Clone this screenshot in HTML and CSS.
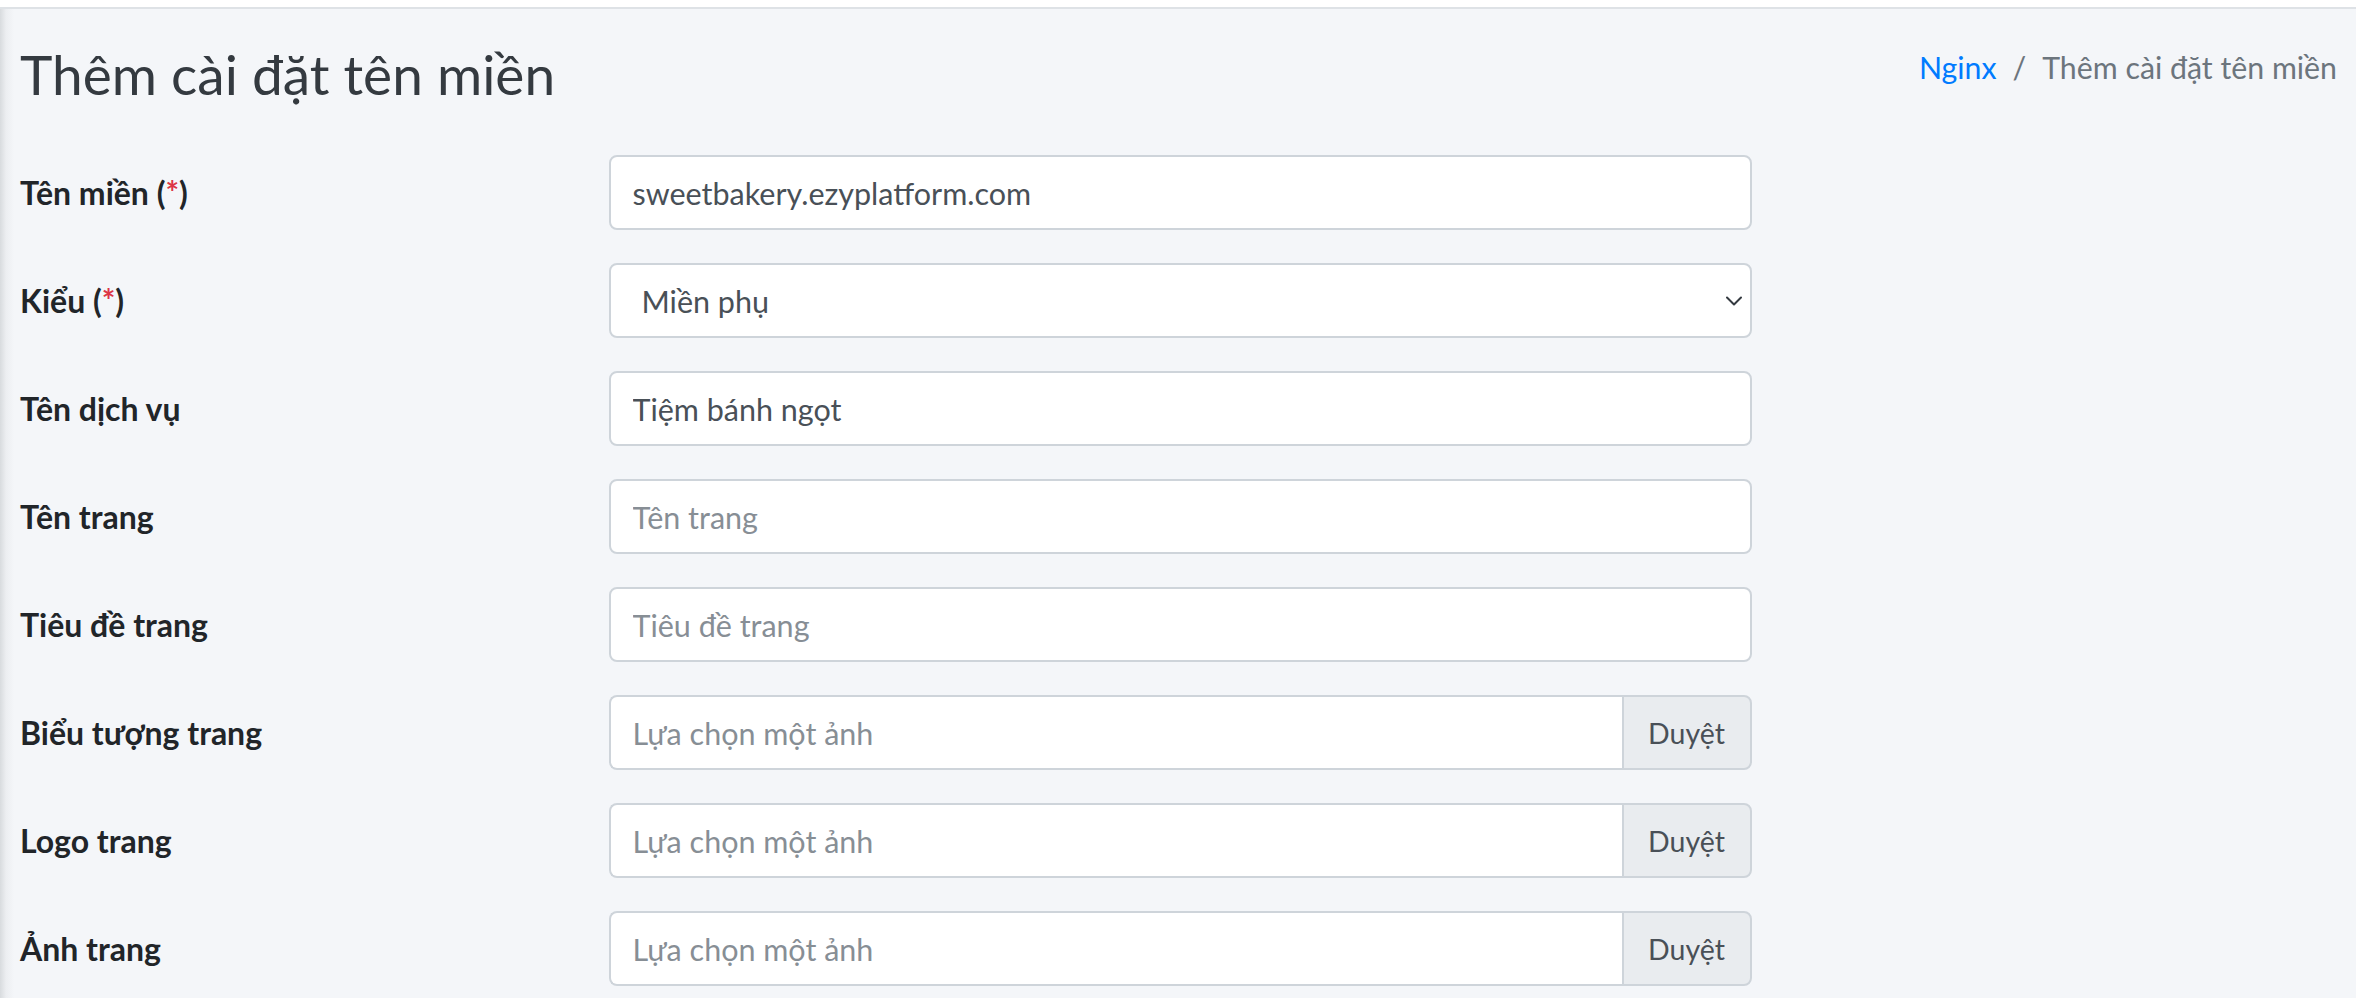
FILE: index.html
```html
<!DOCTYPE html>
<html lang="vi">
<head>
  <meta charset="UTF-8" />
  <meta name="viewport" content="width=device-width, initial-scale=1.0" />
  <title>Thêm cài đặt tên miền</title>
  <link rel="stylesheet" href="styles.css">
</head>
<body>
  <!-- Top navbar (cut off) -->
  <div class="main-header"></div>

  <div class="content-wrapper">
    <!-- Page header -->
    <div class="content-header">
      <h1 class="page-title">Thêm cài đặt tên miền</h1>
      <ol class="breadcrumb">
        <li class="breadcrumb-item"><a href="#">Nginx</a></li>
        <li class="breadcrumb-sep">/</li>
        <li class="breadcrumb-item active">Thêm cài đặt tên miền</li>
      </ol>
    </div>

    <!-- Domain form -->
    <form class="content">
      <div class="form-row">
        <label class="col-label">Tên miền (<span class="required">*</span>)</label>
        <div class="col-field">
          <input class="form-control" type="text" value="sweetbakery.ezyplatform.com">
        </div>
      </div>

      <div class="form-row">
        <label class="col-label">Kiểu (<span class="required">*</span>)</label>
        <div class="col-field">
          <div class="custom-select">
            <span>Miền phụ</span>
            <svg class="chevron" width="16" height="10" viewBox="0 0 16 10">
              <path d="M1 1.5l7 7 7-7" fill="none" stroke="#343a40" stroke-width="2" stroke-linecap="round" stroke-linejoin="round"/>
            </svg>
          </div>
        </div>
      </div>

      <div class="form-row">
        <label class="col-label">Tên dịch vụ</label>
        <div class="col-field">
          <input class="form-control" type="text" value="Tiệm bánh ngọt">
        </div>
      </div>

      <div class="form-row">
        <label class="col-label">Tên trang</label>
        <div class="col-field">
          <input class="form-control" type="text" placeholder="Tên trang">
        </div>
      </div>

      <div class="form-row">
        <label class="col-label">Tiêu đề trang</label>
        <div class="col-field">
          <input class="form-control" type="text" placeholder="Tiêu đề trang">
        </div>
      </div>

      <div class="form-row">
        <label class="col-label">Biểu tượng trang</label>
        <div class="col-field">
          <div class="input-group">
            <input class="form-control" type="text" placeholder="Lựa chọn một ảnh">
            <span class="btn-browse">Duyệt</span>
          </div>
        </div>
      </div>

      <div class="form-row">
        <label class="col-label">Logo trang</label>
        <div class="col-field">
          <div class="input-group">
            <input class="form-control" type="text" placeholder="Lựa chọn một ảnh">
            <span class="btn-browse">Duyệt</span>
          </div>
        </div>
      </div>

      <div class="form-row">
        <label class="col-label">Ảnh trang</label>
        <div class="col-field">
          <div class="input-group">
            <input class="form-control" type="text" placeholder="Lựa chọn một ảnh">
            <span class="btn-browse">Duyệt</span>
          </div>
        </div>
      </div>
    </form>
  </div>
</body>
</html>
```
FILE: styles.css
```css
/* ---------- Base ---------- */
html, body {
  margin: 0;
  padding: 0;
  height: 100%;
  overflow: hidden;
  background-color: #f4f6f9;
  font-family: "Lato", "Noto Sans", sans-serif;
  color: #212529;
}
/* Navbar bottom edge */
.main-header {
  height: 7px;
  background-color: #fff;
  border-bottom: 2px solid #dee2e6;
}
/* Content area with the sidebar shadow on its left */
.content-wrapper {
  min-height: 100%;
  background: linear-gradient(to right, #d8dbde 0, #eceef1 6px, #f4f6f9 14px) no-repeat;
  background-color: #f4f6f9;
}

/* ---------- Header ---------- */
.content-header {
  display: flex;
  justify-content: space-between;
  align-items: flex-start;
  padding: 32px 19px 0 20px;
}
.page-title {
  margin: 0;
  font-size: 55px;
  font-weight: 400;
  line-height: 1.2;
  color: #343a40;
}
.breadcrumb {
  display: flex;
  list-style: none;
  margin: 0;
  padding: 4px 0 0 0;
  font-size: 30.3px;
  line-height: 1.5;
  color: #6c757d;
}
.breadcrumb a {
  color: #007bff;
  text-decoration: none;
}
.breadcrumb-sep {
  padding: 0 16px 0 16px;
}

/* ---------- Form ---------- */
.content {
  margin: 0;
  padding: 48px 4px 0 8px;
}
.form-row {
  display: flex;
  align-items: center;
  margin-bottom: 33px;
}
.col-label {
  flex: 0 0 25%;
  box-sizing: border-box;
  padding: 0 14.5px 0 12px;
  font-size: 32px;
  font-weight: 700;
  color: #212529;
}
.required {
  color: #dc3545;
}
.col-field {
  flex: 0 0 50%;
  box-sizing: border-box;
  padding: 0 14.5px;
}
.form-control {
  display: block;
  box-sizing: border-box;
  width: 100%;
  height: 75px;
  padding: 0 22px;
  font-family: inherit;
  font-size: 30.5px;
  color: #495057;
  background-color: #fff;
  border: 2px solid #ced4da;
  border-radius: 8px;
  outline: none;
}
.form-control::placeholder {
  color: #878e95;
  opacity: 1;
}
/* Select box */
.custom-select {
  display: flex;
  align-items: center;
  justify-content: space-between;
  box-sizing: border-box;
  height: 75px;
  padding: 0 8px 0 31px;
  font-size: 30.5px;
  color: #495057;
  background-color: #fff;
  border: 2px solid #ced4da;
  border-radius: 8px;
}
.chevron {
  display: block;
}
/* File input with browse button */
.input-group {
  display: flex;
}
.input-group .form-control {
  flex: 1;
  min-width: 0;
  border-right: none;
  border-radius: 8px 0 0 8px;
}
.btn-browse {
  display: flex;
  align-items: center;
  justify-content: center;
  box-sizing: border-box;
  flex: 0 0 130px;
  height: 75px;
  font-size: 28.5px;
  color: #495057;
  background-color: #e9ecef;
  border: 2px solid #ced4da;
  border-radius: 0 8px 8px 0;
}
```
